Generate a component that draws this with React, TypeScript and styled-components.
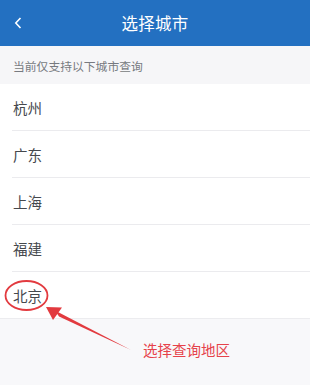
import * as React from 'react';
import styled, { createGlobalStyle } from 'styled-components';

const GlobalStyle = createGlobalStyle`
  html, body {
    margin: 0;
    padding: 0;
    background: #f8f8fa;
  }
  body {
    font-family: "Noto Sans CJK SC", "Noto Sans", sans-serif;
  }
`;

const Page = styled.div`
  position: relative;
  width: 310px;
  height: 385px;
  overflow: hidden;
  background: #f8f8fa;
`;

const Header = styled.div`
  height: 46px;
  background: #2370c1;
  display: flex;
  align-items: center;
  justify-content: center;
  position: relative;
`;

const BackButton = styled.div`
  position: absolute;
  left: 11px;
  top: 15px;
  width: 14px;
  height: 16px;
  display: flex;
  align-items: center;
  justify-content: center;
`;

const Title = styled.div`
  color: #ffffff;
  font-size: 16.5px;
  letter-spacing: 0.3px;
`;

const Notice = styled.div`
  height: 38px;
  padding-left: 13px;
  display: flex;
  align-items: center;
  font-size: 11.8px;
  color: #777a80;
  background: #f6f6f8;
`;

const List = styled.div`
  background: #ffffff;
  border-bottom: 1px solid #ececef;
`;

const Row = styled.div<{ $last?: boolean }>`
  margin-left: 12px;
  height: 46px;
  display: flex;
  align-items: center;
  padding-left: 1px;
  font-size: 14.5px;
  color: #45484d;
  border-bottom: ${(p) => (p.$last ? 'none' : '1px solid #ebebee')};
`;

const Overlay = styled.svg`
  position: absolute;
  left: 0;
  top: 0;
  pointer-events: none;
`;

const Hint = styled.div`
  position: absolute;
  left: 143px;
  top: 339px;
  font-size: 14.5px;
  color: #e6424a;
`;

const cities = ['杭州', '广东', '上海', '福建', '北京'];

export default function App() {
  return (
    <>
      <GlobalStyle />
      <Page>
        <Header>
          <BackButton>
            <svg width="8" height="12" viewBox="0 0 8 12">
              <path d="M6.5 1 L1.8 6 L6.5 11" stroke="#ffffff" strokeWidth="1.6" fill="none" />
            </svg>
          </BackButton>
          <Title>选择城市</Title>
        </Header>
        <Notice>当前仅支持以下城市查询</Notice>
        <List>
          {cities.map((c, i) => (
            <Row key={c} $last={i === cities.length - 1}>
              {c}
            </Row>
          ))}
        </List>
        <Overlay width="310" height="385" viewBox="0 0 310 385">
          <ellipse cx="26.5" cy="295.5" rx="21" ry="14.5" stroke="#e23a3f" strokeWidth="1.8" fill="none" />
          <path d="M131 350 L55 310.5 L59 316.5 Z" fill="#e23a3f" />
          <path d="M46 307 L62 307.5 L53 320 Z" fill="#e23a3f" />
        </Overlay>
        <Hint>选择查询地区</Hint>
      </Page>
    </>
  );
}
